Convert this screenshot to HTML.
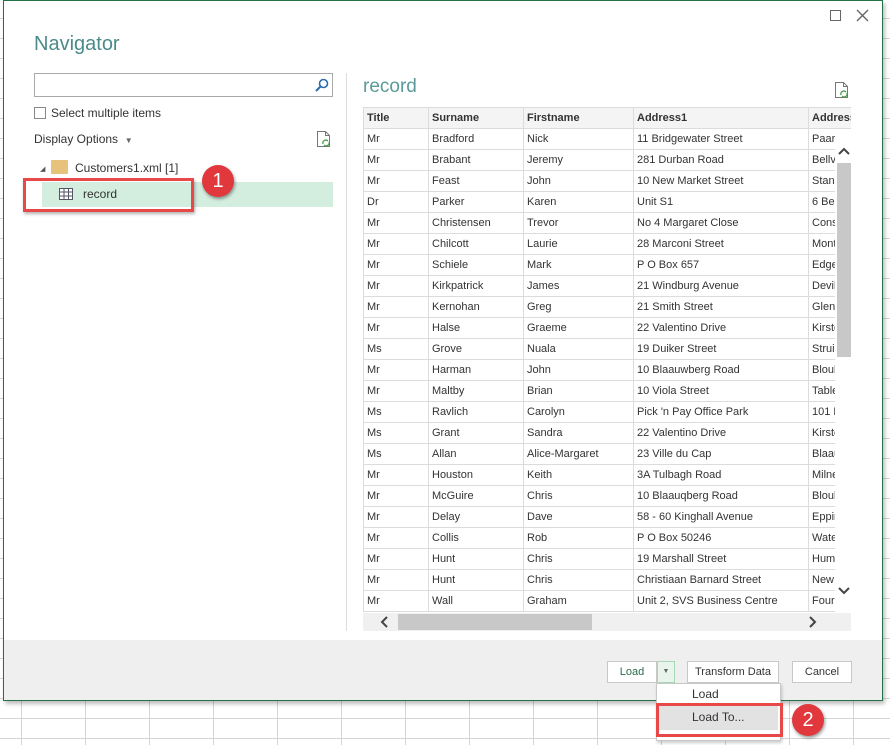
<!DOCTYPE html>
<html><head><style>
*{box-sizing:border-box;margin:0;padding:0}
body{width:890px;height:745px;overflow:hidden;position:relative;font-family:"Liberation Sans",sans-serif;background:#fff;
background-image:linear-gradient(#d4d4d4 1px,transparent 1px),linear-gradient(90deg,#d4d4d4 1px,transparent 1px);
background-size:64px 20px;background-position:21px -2px}
.a{position:absolute}
#dlg{left:3px;top:0;width:880px;height:701px;background:#fff;border:1px solid #217346;box-shadow:2px 3px 4px rgba(0,0,0,.25)}
#in{position:absolute;left:-1px;top:0;width:880px;height:699px}
table{border-collapse:collapse;font-size:11px;color:#333}
td{height:21px;border:1px solid #dcdcdc;padding:0 3px;white-space:nowrap;overflow:hidden;max-width:0}
tr.h td{font-weight:bold;background:#f4f4f4;color:#333}
.btn{position:absolute;border:1px solid #c8c8c8;background:#fff;font-size:11px;color:#333;text-align:center;line-height:20px;height:22px}
</style></head><body>
<div id="dlg" class="a"><div id="in">
 <div class="a" style="left:827px;top:9px;width:11px;height:11px;border:1px solid #666"></div>
 <svg class="a" style="left:853px;top:8px" width="13" height="13"><path d="M1 1L12 12M12 1L1 12" stroke="#666" stroke-width="1.4"/></svg>
 <div class="a" style="left:31px;top:32px;font-size:20px;color:#4b8b8a">Navigator</div>
 <div class="a" style="left:31px;top:72px;width:299px;height:24px;border:1px solid #aaa"></div>
 <svg class="a" style="left:312px;top:77px" width="14" height="14"><circle cx="8.5" cy="5.5" r="4" fill="none" stroke="#2b6cb0" stroke-width="1.6"/><line x1="5.5" y1="8.5" x2="1" y2="13" stroke="#2b6cb0" stroke-width="2"/></svg>
 <div class="a" style="left:31px;top:106px;width:12px;height:12px;border:1px solid #888"></div>
 <div class="a" style="left:48px;top:105px;font-size:12px;color:#333">Select multiple items</div>
 <div class="a" style="left:31px;top:131px;font-size:12px;color:#333">Display Options &nbsp;<span style="font-size:8px;color:#666">▼</span></div>
 <svg class="a" style="left:313px;top:129px" width="16" height="18"><path d="M1.5 1.5h8l4 4v11h-12z" fill="none" stroke="#777"/><path d="M9.5 1.5v4h4" fill="none" stroke="#777"/><path d="M7 14a3 3 0 0 1 5-3M13 12a3 3 0 0 1-5 3" fill="none" stroke="#3a9a3a" stroke-width="1.2"/></svg>
 <div class="a" style="left:37px;top:164px;font-size:7px;color:#555">◢</div>
 <div class="a" style="left:48px;top:159px;width:17px;height:14px;background:#e6c27a;border-radius:1px"></div>
 <div class="a" style="left:72px;top:160px;font-size:12px;color:#333">Customers1.xml [1]</div>
 <div class="a" style="left:39px;top:181px;width:291px;height:25px;background:#d3eddf"></div>
 <svg class="a" style="left:56px;top:187px" width="14" height="12"><rect x=".5" y=".5" width="13" height="11" fill="#fff" stroke="#556"/><path d="M.5 4h13M.5 8h13M5 .5v11M9.5.5v11" stroke="#556"/></svg>
 <div class="a" style="left:80px;top:186px;font-size:12px;color:#333">record</div>
 <div class="a" style="left:20px;top:177px;width:171px;height:34px;border:3px solid #e84848;box-shadow:1px 2px 3px rgba(0,0,0,.3)"></div>
 <div class="a" style="left:199px;top:164px;width:32px;height:32px;border-radius:50%;background:#e0383c;color:#fff;font-size:20px;text-align:center;line-height:32px;box-shadow:1px 2px 3px rgba(0,0,0,.4)">1</div>
 <div class="a" style="left:343px;top:72px;width:1px;height:558px;background:#ddd"></div>
 <div class="a" style="left:360px;top:75px;font-size:19px;color:#5a9a9a">record</div>
 <svg class="a" style="left:831px;top:80px" width="16" height="18"><path d="M1.5 1.5h8l4 4v11h-12z" fill="none" stroke="#777"/><path d="M9.5 1.5v4h4" fill="none" stroke="#777"/><path d="M7 14a3 3 0 0 1 5-3M13 12a3 3 0 0 1-5 3" fill="none" stroke="#3a9a3a" stroke-width="1.2"/></svg>
 <div class="a" style="left:360px;top:106px;width:488px;height:506px;overflow:hidden">
 <table style="table-layout:fixed;width:530px">
 <colgroup><col style="width:65px"><col style="width:95px"><col style="width:110px"><col style="width:175px"><col style="width:85px"></colgroup>
 <tr class="h"><td>Title</td><td>Surname</td><td>Firstname</td><td>Address1</td><td>Address2</td></tr>
 <tr><td>Mr</td><td>Bradford</td><td>Nick</td><td>11 Bridgewater Street</td><td>Paarden</td></tr>
 <tr><td>Mr</td><td>Brabant</td><td>Jeremy</td><td>281 Durban Road</td><td>Bellville</td></tr>
 <tr><td>Mr</td><td>Feast</td><td>John</td><td>10 New Market Street</td><td>Standard</td></tr>
 <tr><td>Dr</td><td>Parker</td><td>Karen</td><td>Unit S1</td><td>6 Beach</td></tr>
 <tr><td>Mr</td><td>Christensen</td><td>Trevor</td><td>No 4 Margaret Close</td><td>Constantia</td></tr>
 <tr><td>Mr</td><td>Chilcott</td><td>Laurie</td><td>28 Marconi Street</td><td>Montague</td></tr>
 <tr><td>Mr</td><td>Schiele</td><td>Mark</td><td>P O Box 657</td><td>Edgemead</td></tr>
 <tr><td>Mr</td><td>Kirkpatrick</td><td>James</td><td>21 Windburg Avenue</td><td>Devil</td></tr>
 <tr><td>Mr</td><td>Kernohan</td><td>Greg</td><td>21 Smith Street</td><td>Glen</td></tr>
 <tr><td>Mr</td><td>Halse</td><td>Graeme</td><td>22 Valentino Drive</td><td>Kirstenhof</td></tr>
 <tr><td>Ms</td><td>Grove</td><td>Nuala</td><td>19 Duiker Street</td><td>Struis</td></tr>
 <tr><td>Mr</td><td>Harman</td><td>John</td><td>10 Blaauwberg Road</td><td>Bloub</td></tr>
 <tr><td>Mr</td><td>Maltby</td><td>Brian</td><td>10 Viola Street</td><td>Table</td></tr>
 <tr><td>Ms</td><td>Ravlich</td><td>Carolyn</td><td>Pick 'n Pay Office Park</td><td>101 Ma</td></tr>
 <tr><td>Ms</td><td>Grant</td><td>Sandra</td><td>22 Valentino Drive</td><td>Kirsten</td></tr>
 <tr><td>Ms</td><td>Allan</td><td>Alice-Margaret</td><td>23 Ville du Cap</td><td>Blaau</td></tr>
 <tr><td>Mr</td><td>Houston</td><td>Keith</td><td>3A Tulbagh Road</td><td>Milner</td></tr>
 <tr><td>Mr</td><td>McGuire</td><td>Chris</td><td>10 Blaauqberg Road</td><td>Bloub</td></tr>
 <tr><td>Mr</td><td>Delay</td><td>Dave</td><td>58 - 60 Kinghall Avenue</td><td>Epping</td></tr>
 <tr><td>Mr</td><td>Collis</td><td>Rob</td><td>P O Box 50246</td><td>Water</td></tr>
 <tr><td>Mr</td><td>Hunt</td><td>Chris</td><td>19 Marshall Street</td><td>Humb</td></tr>
 <tr><td>Mr</td><td>Hunt</td><td>Chris</td><td>Christiaan Barnard Street</td><td>New</td></tr>
 <tr><td>Mr</td><td>Wall</td><td>Graham</td><td>Unit 2, SVS Business Centre</td><td>Four</td></tr>
 </table></div>
 <div class="a" style="left:832px;top:128px;width:16px;height:484px;background:#fff"></div>
 <svg class="a" style="left:834px;top:145px" width="14" height="10"><path d="M2 8L7 3L12 8" fill="none" stroke="#444" stroke-width="2"/></svg>
 <div class="a" style="left:834px;top:162px;width:14px;height:194px;background:#c8c8c8"></div>
 <svg class="a" style="left:834px;top:585px" width="14" height="10"><path d="M2 2L7 7L12 2" fill="none" stroke="#444" stroke-width="2"/></svg>
 <div class="a" style="left:360px;top:612px;width:488px;height:18px;background:#f0f0f0"></div>
 <svg class="a" style="left:376px;top:615px" width="10" height="12"><path d="M8 1L3 6L8 11" fill="none" stroke="#444" stroke-width="2"/></svg>
 <div class="a" style="left:395px;top:613px;width:194px;height:16px;background:#c8c8c8"></div>
 <svg class="a" style="left:805px;top:615px" width="10" height="12"><path d="M2 1L7 6L2 11" fill="none" stroke="#444" stroke-width="2"/></svg>
 <div class="a" style="left:1px;top:639px;width:878px;height:60px;background:#efefef"></div>
 <div class="btn" style="left:604px;top:660px;width:50px;color:#2d6b4f">Load</div>
 <div class="btn" style="left:654px;top:660px;width:18px;border-color:#a8d8b8;background:#e8f4ec;font-size:7px;color:#666">▼</div>
 <div class="btn" style="left:684px;top:660px;width:92px">Transform Data</div>
 <div class="btn" style="left:789px;top:660px;width:60px">Cancel</div>
</div></div>
<div class="a" style="left:656px;top:683px;width:125px;height:58px;background:#fff;border:1px solid #c8c8c8;box-shadow:1px 2px 3px rgba(0,0,0,.2)"></div>
<div class="a" style="left:692px;top:687px;font-size:12px;color:#333">Load</div>
<div class="a" style="left:659px;top:706px;width:119px;height:24px;background:#e2e2e2"></div>
<div class="a" style="left:692px;top:710px;font-size:12px;color:#333">Load To...</div>
<div class="a" style="left:656px;top:703px;width:127px;height:34px;border:3px solid #e84848"></div>
<div class="a" style="left:792px;top:704px;width:32px;height:32px;border-radius:50%;background:#e0383c;color:#fff;font-size:20px;text-align:center;line-height:32px;box-shadow:1px 2px 3px rgba(0,0,0,.4)">2</div>
</body></html>
